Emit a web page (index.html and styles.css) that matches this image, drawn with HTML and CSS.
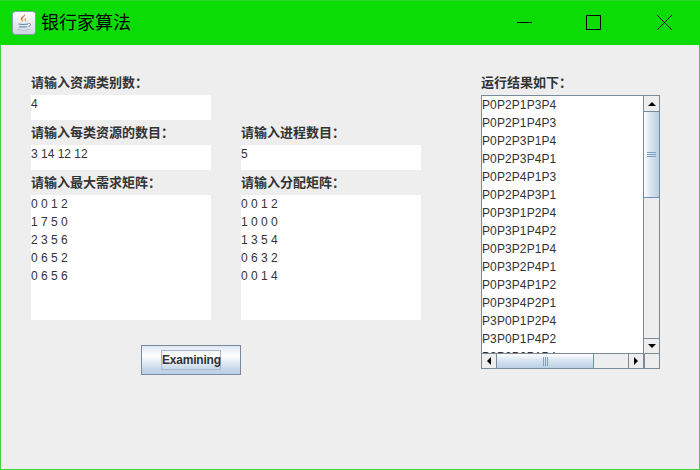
FILE: index.html
```html
<!DOCTYPE html>
<html lang="zh-CN">
<head>
  <meta charset="UTF-8" />
  <title>银行家算法</title>
  <link rel="stylesheet" href="styles.css">
</head>
<body>
  <div class="window">
    <header class="titlebar">
      <span class="app-icon">
        <svg width="24" height="24" viewBox="0 0 24 24">
          <defs>
            <linearGradient id="iconBg" x1="0" y1="0" x2="0" y2="1">
              <stop offset="0" stop-color="#ffffff" />
              <stop offset="1" stop-color="#cfd6e0" />
            </linearGradient>
          </defs>
          <rect x="0.5" y="0.5" width="23" height="23" rx="3" fill="url(#iconBg)" stroke="#8a99ab" />
          <path d="M13 3c1 2-3 3.500-2.500 6 .2 1 .8 1.500 1.200 2-2-.8-3.500-2.200-2.700-4C9.600 5.500 12 5 13 3z" fill="#e2762a" />
          <path d="M14.500 6.500c-1.500.8-2.200 1.700-1.800 3 .2.600.4 1 .3 1.500 1.300-1 1-2 .8-2.800-.1-.6.100-1.100.7-1.700z" fill="#e8964f" />
          <path d="M6.500 12.500c2.500.6 7 .6 9.500 0v1c-2.500.6-7 .6-9.500 0zM7 15.200c2 .5 6 .5 8 0v1c-2 .5-6 .5-8 0z" fill="#5f86a8" />
          <path d="M16.500 12.500c2.500-.5 2.800 2.200 0 3" fill="none" stroke="#5f86a8" />
          <path d="M5 18.200c3 1 10 1 13.500 0-.8 1.500-12.500 1.500-13.500 0z" fill="#5f86a8" />
        </svg>
      </span>
      <h1 class="app-title">银行家算法</h1>
      <div class="window-controls">
        <span class="win-btn">
          <svg width="16" height="16" viewBox="0 0 16 16"><path d="M0 7.500h15" stroke="#000" fill="none" /></svg>
        </span>
        <span class="win-btn">
          <svg width="16" height="16" viewBox="0 0 16 16"><rect x="0.500" y="0.500" width="14" height="14" stroke="#000" fill="none" /></svg>
        </span>
        <span class="win-btn win-btn-close">
          <svg width="16" height="16" viewBox="0 0 16 16"><path d="M0 0l15 15M15 0L0 15" stroke="#000" fill="none" shape-rendering="crispEdges" /></svg>
        </span>
      </div>
    </header>

    <main class="content">
      <div class="form-area">
        <div class="form-grid">
          <div class="field">
            <label>请输入资源类别数：</label>
            <div class="text-box">4</div>
          </div>
          <div class="field-empty"></div>

          <div class="field">
            <label>请输入每类资源的数目：</label>
            <div class="text-box">3 14 12 12</div>
          </div>
          <div class="field">
            <label>请输入进程数目：</label>
            <div class="text-box">5</div>
          </div>

          <div class="field">
            <label>请输入最大需求矩阵：</label>
            <div class="text-area">
              <div>0 0 1 2</div>
              <div>1 7 5 0</div>
              <div>2 3 5 6</div>
              <div>0 6 5 2</div>
              <div>0 6 5 6</div>
            </div>
          </div>
          <div class="field">
            <label>请输入分配矩阵：</label>
            <div class="text-area">
              <div>0 0 1 2</div>
              <div>1 0 0 0</div>
              <div>1 3 5 4</div>
              <div>0 6 3 2</div>
              <div>0 0 1 4</div>
            </div>
          </div>
        </div>

        <button class="examine-btn"><span class="examine-label">Examining</span></button>
      </div>

      <div class="result-area">
        <label>运行结果如下：</label>
        <div class="scroll-pane">
          <div class="result-list">
            <div>P0P2P1P3P4</div>
            <div>P0P2P1P4P3</div>
            <div>P0P2P3P1P4</div>
            <div>P0P2P3P4P1</div>
            <div>P0P2P4P1P3</div>
            <div>P0P2P4P3P1</div>
            <div>P0P3P1P2P4</div>
            <div>P0P3P1P4P2</div>
            <div>P0P3P2P1P4</div>
            <div>P0P3P2P4P1</div>
            <div>P0P3P4P1P2</div>
            <div>P0P3P4P2P1</div>
            <div>P3P0P1P2P4</div>
            <div>P3P0P1P4P2</div>
            <div>P3P0P2P1P4</div>
          </div>

          <div class="vbar">
            <span class="arrow-btn arrow-btn-up"><i class="tri tri-up"></i></span>
            <span class="vthumb"><i class="grip-h"></i></span>
            <span class="track"></span>
            <span class="arrow-btn arrow-btn-down"><i class="tri tri-down"></i></span>
          </div>

          <div class="hbar">
            <span class="arrow-btn arrow-btn-left"><i class="tri tri-left"></i></span>
            <span class="hthumb"><i class="grip-v"></i></span>
            <span class="track"></span>
            <span class="arrow-btn arrow-btn-right"><i class="tri tri-right"></i></span>
          </div>
          <div class="corner"></div>
        </div>
      </div>
    </main>
  </div>
</body>
</html>
```

FILE: styles.css
```css
* {
  box-sizing: border-box;
}

html, body {
  margin: 0;
  height: 100%;
}

body {
  font-family: "Liberation Sans", "Noto Sans CJK SC", sans-serif;
  font-size: 12px;
  color: #333333;
}

.window {
  width: 700px;
  height: 470px;
  background: #eeeeee;
  border: solid #3fd43a;
  border-width: 0 1px 1px 1px;
  display: flex;
  flex-direction: column;
}

/* title bar */
.titlebar {
  height: 45px;
  margin: 0 -1px;
  background: #0bdc06;
  border-top: 1px solid #2ed52a;
  display: flex;
  align-items: center;
  padding-left: 12px;
}

.app-icon {
  width: 24px;
  height: 24px;
  display: flex;
}

.app-title {
  margin: 0 0 4px 5px;
  font-family: "Noto Sans CJK SC", sans-serif;
  font-size: 18px;
  font-weight: 400;
  color: #000000;
}

.window-controls {
  margin-left: auto;
  display: flex;
  padding-right: 27px;
  gap: 53px;
}

.win-btn {
  width: 16px;
  height: 16px;
  display: flex;
}

.win-btn-close {
  margin-left: 2px;
}

/* form */
.content {
  flex: 1;
  display: flex;
  padding: 29px 0 0 30px;
}

.form-area {
  width: 390px;
}

.form-grid {
  display: grid;
  grid-template-columns: 180px 180px;
  column-gap: 30px;
  row-gap: 4px;
}

label {
  display: block;
  height: 21px;
  line-height: 15px;
  font-family: "Noto Sans CJK SC", sans-serif;
  font-size: 13px;
  font-weight: 700;
  color: #333333;
}

.text-box {
  height: 25px;
  line-height: 19px;
  background: #ffffff;
}

.text-area {
  height: 125px;
  background: #ffffff;
  line-height: 18px;
}

.examine-btn {
  display: flex;
  align-items: center;
  justify-content: center;
  width: 100px;
  height: 30px;
  margin: 25px 0 0 110px;
  padding: 0;
  border: 1px solid #7a8a99;
  background: linear-gradient(to bottom, #dde8f3 0%, #ffffff 35%, #c9d9ea 80%, #b8cfe5 100%);
  font-family: "Liberation Sans", sans-serif;
  font-size: 12px;
  font-weight: 700;
  color: #333333;
}

.examine-label {
  display: block;
  width: 60px;
  height: 20px;
  line-height: 18px;
  border: 1px solid #a8b8cc;
  letter-spacing: -0.2px;
  white-space: nowrap;
}

/* results */
.result-area {
  margin-left: 60px;
  width: 179px;
}

.scroll-pane {
  width: 179px;
  height: 274px;
  border: 1px solid #7a8a99;
  display: grid;
  grid-template-columns: 162px 15px;
  grid-template-rows: 257px 15px;
}

.result-list {
  background: #ffffff;
  overflow: hidden;
  line-height: 18px;
  letter-spacing: 0.1px;
  white-space: nowrap;
  border-right: 1px solid #7a8a99;
}

.vbar {
  display: flex;
  flex-direction: column;
  background: #eeeeee;
}

.hbar {
  display: flex;
  background: #eeeeee;
  border-top: 1px solid #7a8a99;
}

.track {
  flex: 1;
}

.corner {
  background: #eeeeee;
  border-top: 1px solid #7a8a99;
  border-left: 1px solid #7a8a99;
}

.arrow-btn {
  display: flex;
  align-items: center;
  justify-content: center;
  flex: none;
  background: #eeeeee;
}

.arrow-btn-up {
  height: 16px;
  border-bottom: 1px solid #7a8a99;
}

.arrow-btn-down {
  height: 15px;
  border-top: 1px solid #7a8a99;
}

.arrow-btn-left {
  width: 15px;
  border-right: 1px solid #7a8a99;
}

.arrow-btn-right {
  width: 16px;
  border-left: 1px solid #7a8a99;
  border-right: 1px solid #7a8a99;
}

.tri {
  width: 0;
  height: 0;
  border-style: solid;
  border-color: transparent;
}

.tri-up {
  border-width: 0 4px 4px 4px;
  border-bottom-color: #000000;
}

.tri-down {
  border-width: 4px 4px 0 4px;
  border-top-color: #000000;
}

.tri-left {
  border-width: 4px 4px 4px 0;
  border-right-color: #000000;
}

.tri-right {
  border-width: 4px 0 4px 4px;
  border-left-color: #000000;
}

.vthumb {
  height: 86px;
  flex: none;
  display: flex;
  align-items: center;
  justify-content: center;
  background: linear-gradient(to right, #ffffff, #dce7f2 40%, #b8cfe5);
  border-bottom: 1px solid #6d8fb8;
}

.hthumb {
  width: 97px;
  flex: none;
  display: flex;
  align-items: center;
  justify-content: center;
  background: linear-gradient(to bottom, #ffffff, #dce7f2 40%, #b8cfe5);
  border-right: 1px solid #6d8fb8;
}

.grip-h {
  width: 9px;
  height: 5px;
  background: repeating-linear-gradient(to bottom, #7f9fc4 0, #7f9fc4 1px, transparent 1px, transparent 2px);
}

.grip-v {
  width: 5px;
  height: 9px;
  background: repeating-linear-gradient(to right, #7f9fc4 0, #7f9fc4 1px, transparent 1px, transparent 2px);
}
```
